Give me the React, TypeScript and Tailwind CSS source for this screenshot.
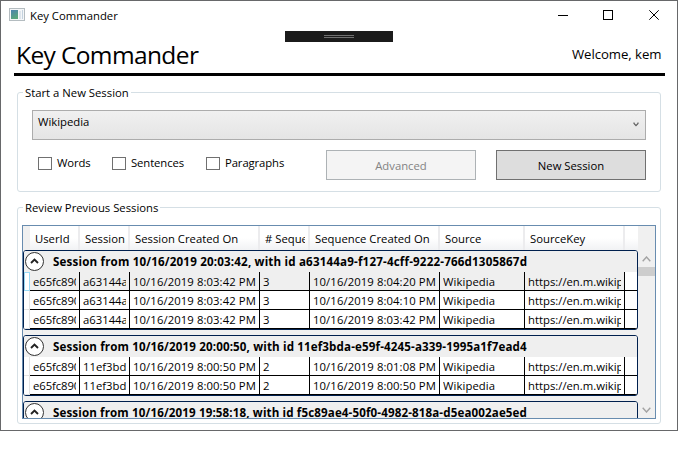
import type { ReactNode } from 'react';

const columns = [
  { title: 'UserId', width: 'w-[50px]', tracking: 'tracking-[-0.08px]' },
  { title: 'Session Id', width: 'w-[50px]', tracking: 'tracking-normal' },
  { title: 'Session Created On', width: 'w-[130px]', tracking: 'tracking-[0.09px]' },
  { title: '# Sequences', width: 'w-[50px]', tracking: 'tracking-normal' },
  { title: 'Sequence Created On', width: 'w-[130px]', tracking: 'tracking-[0.09px]' },
  { title: 'Source', width: 'w-[85px]', tracking: 'tracking-[0.09px]' },
  { title: 'SourceKey', width: 'w-[100px]', tracking: 'tracking-normal' },
];

const link = 'https://en.m.wikipedia.org';

const groups = [
  {
    title: 'Session from 10/16/2019 20:03:42, with id a63144a9-f127-4cff-9222-766d1305867d',
    tracking: 'tracking-[0.17px]',
    rows: [
      ['e65fc890', 'a63144a9', '10/16/2019 8:03:42 PM', '3', '10/16/2019 8:04:20 PM', 'Wikipedia', link],
      ['e65fc890', 'a63144a9', '10/16/2019 8:03:42 PM', '3', '10/16/2019 8:04:10 PM', 'Wikipedia', link],
      ['e65fc890', 'a63144a9', '10/16/2019 8:03:42 PM', '3', '10/16/2019 8:03:42 PM', 'Wikipedia', link],
    ],
  },
  {
    title: 'Session from 10/16/2019 20:00:50, with id 11ef3bda-e59f-4245-a339-1995a1f7ead4',
    tracking: 'tracking-[0.13px]',
    rows: [
      ['e65fc890', '11ef3bda', '10/16/2019 8:00:50 PM', '2', '10/16/2019 8:01:08 PM', 'Wikipedia', link],
      ['e65fc890', '11ef3bda', '10/16/2019 8:00:50 PM', '2', '10/16/2019 8:00:50 PM', 'Wikipedia', link],
    ],
  },
  {
    title: 'Session from 10/16/2019 19:58:18, with id f5c89ae4-50f0-4982-818a-d5ea002ae5ed',
    tracking: 'tracking-[0.12px]',
    rows: [],
  },
];

function TitleBar() {
  return (
    <header className="flex h-[30px] items-start">
      <svg className="ml-2 mt-[7px] shrink-0" width="16" height="14" viewBox="0 0 16 14">
        <defs>
          <linearGradient id="pane" x1="0" y1="0" x2="0.4" y2="1">
            <stop offset="0" stopColor="#4c83b0" />
            <stop offset="1" stopColor="#58a67c" />
          </linearGradient>
        </defs>
        <rect x="0.5" y="0.5" width="15" height="12" fill="#f4f6f8" stroke="#b4bcc0" />
        <rect x="2" y="2" width="7" height="9" fill="url(#pane)" />
        <rect x="10" y="3" width="2" height="8" fill="#dde5ec" />
        <rect x="13" y="2" width="1" height="9" fill="#c4d2de" />
      </svg>
      <h1 className="ml-[5px] mt-[7px] text-[11.3px] leading-4">Key Commander</h1>
      <svg className="ml-auto mr-[17px] mt-[9px]" width="102" height="10" viewBox="0 0 102 10" fill="none" stroke="black">
        <path d="M0 5.5h10" />
        <rect x="45.5" y="0.5" width="9" height="9" />
        <path d="M91.3 0.3l9.4 9.4M100.7 0.3l-9.4 9.4" />
      </svg>
    </header>
  );
}

function GroupBox({ label, height, children }: { label: string; height: string; children: ReactNode }) {
  return (
    <fieldset className={`${height} ml-4 w-[644px] min-w-0 rounded-[3px] border border-[#d5dfe5]`}>
      <legend className="ml-[5px] h-[15px] px-[2px] text-[11.3px] leading-4">{label}</legend>
      {children}
    </fieldset>
  );
}

function CheckBox({ label, gap }: { label: string; gap: string }) {
  return (
    <label className={`flex items-center ${gap}`}>
      <span className="h-[13px] w-[14px] border border-[#707070] bg-white" />
      <span className="ml-[5px] text-[11.3px] leading-4 tracking-[-0.1px]">{label}</span>
    </label>
  );
}

function Expander() {
  return (
    <svg className="ml-[1px] shrink-0" width="19" height="19" viewBox="0 0 19 19" fill="none">
      <circle cx="9.5" cy="9.5" r="9" fill="white" stroke="#333" />
      <path d="M6 11l3.5-3.5L13 11" stroke="#222" strokeWidth="1.9" />
    </svg>
  );
}

function SessionGroup({ title, tracking, rows, first }: { title: string; tracking: string; rows: string[][]; first: boolean }) {
  return (
    <section className="mb-[5px] overflow-hidden rounded-[3px] border border-[#00204e] bg-white">
      <div className="flex h-[21px] items-center bg-[#efefef]">
        <Expander />
        <h2 className={`ml-[9px] whitespace-nowrap text-[11.6px] font-bold leading-4 ${tracking}`}>{title}</h2>
      </div>
      {rows.map((row, r) => (
        <div key={r} className="flex h-[19px]">
          <div
            className={
              first && r === 0
                ? 'w-[6px] border border-[#99d9f5] bg-white'
                : 'w-[6px] border-b border-r border-[#e3e3e3] bg-white'
            }
          />
          {row.map((cell, c) => (
            <div
              key={c}
              className={`${columns[c].width} border-b border-r border-black px-[3px] ${first && r === 0 ? 'bg-[#efefef]' : 'bg-white'}`}
            >
              <div className={`h-[18px] overflow-hidden whitespace-nowrap text-[11.3px] leading-[19px] ${columns[c].tracking}`}>{cell}</div>
            </div>
          ))}
          <div className="flex-1 border-b border-black" />
        </div>
      ))}
    </section>
  );
}

function ScrollBar() {
  return (
    <div className="flex w-[17px] flex-col items-center bg-[#f0f0f0] pt-[30px]">
      <svg width="9" height="6" viewBox="0 0 9 6" fill="none" stroke="#a3a3a3" strokeWidth="1.4">
        <path d="M0.7 5.3L4.5 1l3.8 4.3" />
      </svg>
      <div className="mt-[5px] h-[9px] w-full bg-[#cdcdcd]" />
      <svg className="mb-[5px] mt-auto" width="9" height="6" viewBox="0 0 9 6" fill="none" stroke="#a3a3a3" strokeWidth="1.4">
        <path d="M0.7 0.7L4.5 5l3.8-4.3" />
      </svg>
    </div>
  );
}

function DataGrid() {
  return (
    <div className="ml-1 mt-[10px] flex h-[194px] w-[634px] overflow-hidden border border-[#688caf] bg-[#f0f0f0]">
      <div className="w-[615px]">
        <div className="flex h-6">
          <div className="w-[7px] bg-[#f0f0f0]" />
          {columns.map((col) => (
            <div
              key={col.title}
              className={`${col.width} border-r-2 border-[#ececee] bg-linear-to-b from-white from-50% to-[#f1f2f4] pl-[5px] pr-[3px]`}
            >
              <div className="h-6 overflow-hidden whitespace-nowrap text-[11.3px] leading-[26px]">{col.title}</div>
            </div>
          ))}
          <div className="flex-1 bg-linear-to-b from-white from-50% to-[#f1f2f4]" />
        </div>
        {groups.map((g, i) => (
          <SessionGroup key={g.title} title={g.title} tracking={g.tracking} rows={g.rows} first={i === 0} />
        ))}
      </div>
      <ScrollBar />
    </div>
  );
}

export default function App() {
  return (
    <div className="h-[459px] w-[678px] overflow-hidden bg-white font-['Open_Sans',sans-serif] text-black">
      <main className="relative h-[431px] border border-[#67686a] bg-white">
        <TitleBar />
        <div className="absolute left-[284px] top-[30px] flex h-[11px] w-[108px] flex-col items-center gap-px bg-[#1b1b1b] pt-1">
          <div className="h-px w-[30px] bg-[#707070]" />
          <div className="h-px w-[30px] bg-[#707070]" />
        </div>
        <div className="ml-[12.5px] flex h-[45px] w-[651px] justify-between border-b-3 border-black pl-[2.5px] pr-[3px]">
          <div className="text-[24.5px] leading-[48px] tracking-[-0.62px]">Key Commander</div>
          <div className="text-[13.2px] leading-[46px] tracking-[-0.05px]">Welcome, kem</div>
        </div>
        <div className="h-[9px]" />
        <GroupBox label="Start a New Session" height="h-[107px]">
          <div className="ml-[14px] mt-[10px] flex h-[30px] w-[614px] justify-between border border-[#acacac] bg-linear-to-b from-[#f0f0f0] to-[#e5e5e5] pl-[5px] pr-[6px]">
            <span className="mt-[3px] text-[11.3px] leading-4">Wikipedia</span>
            <svg className="mt-[11px]" width="6" height="5" viewBox="0 0 6 5" fill="none" stroke="#606060" strokeWidth="1.2">
              <path d="M1 0.5v1L3 3.6l2-2.1v-1" />
            </svg>
          </div>
          <div className="ml-5 mt-[10px] flex h-[30px] items-start">
            <div className="mt-[5px] flex w-[288px]">
              <CheckBox label="Words" gap="w-[74px]" />
              <CheckBox label="Sentences" gap="w-[94px]" />
              <CheckBox label="Paragraphs" gap="w-[100px]" />
            </div>
            <button className="h-[30px] w-[150px] border border-[#adb2b5] bg-[#f4f4f4] pt-[2px] text-[11.3px] text-[#838383]">Advanced</button>
            <button className="ml-5 h-[30px] w-[150px] border border-[#707070] bg-[#dddddd] pt-[2px] text-[11.3px]">New Session</button>
          </div>
        </GroupBox>
        <div className="h-[8px]" />
        <GroupBox label="Review Previous Sessions" height="h-[224px]">
          <DataGrid />
        </GroupBox>
      </main>
    </div>
  );
}
